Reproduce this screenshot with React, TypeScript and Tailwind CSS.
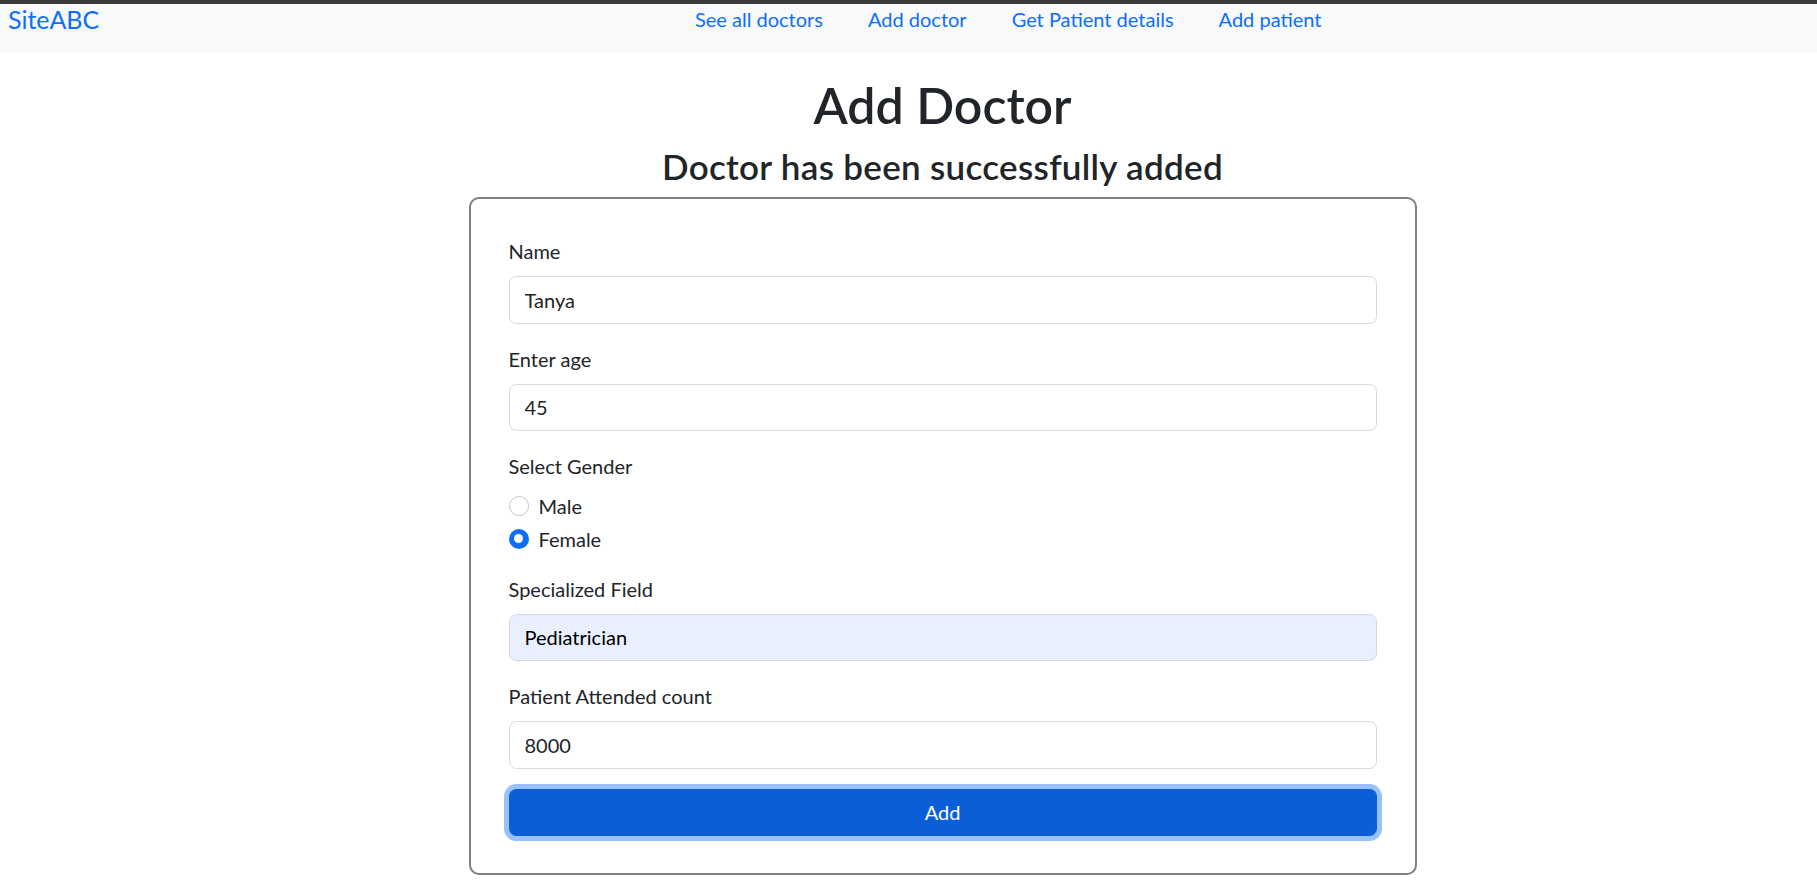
import React from "react";

function Field({ label, value, autofill }: { label: string; value: string; autofill?: boolean }) {
  return (
    <div className="mb-[20px]">
      <label className="mb-[10px] block text-[20px] leading-[30px]">{label}</label>
      <input
        readOnly
        value={value}
        className={
          autofill
            ? "block h-[47.5px] w-full rounded-[7.5px] border border-[#d6dadf] bg-[#e8f0fe] px-[15px] text-[20px] leading-[30px] text-black outline-none"
            : "block h-[47.5px] w-full rounded-[7.5px] border border-[#d6dadf] bg-white px-[15px] text-[20px] leading-[30px] text-[#212529] outline-none"
        }
      />
    </div>
  );
}

function Radio({ label, checked }: { label: string; checked?: boolean }) {
  return (
    <div className="mb-[2.5px] flex h-[30px] items-start">
      {checked ? (
        <span className="mt-[5px] flex h-[20px] w-[20px] items-center justify-center rounded-full bg-[#0d6efd]">
          <span className="h-[9px] w-[9px] rounded-full bg-white" />
        </span>
      ) : (
        <span className="mt-[5px] h-[20px] w-[20px] rounded-full border border-[#c4c4c4] bg-white" />
      )}
      <span className="ml-[10px] text-[20px] leading-[30px]">{label}</span>
    </div>
  );
}

export default function App() {
  return (
    <div className="min-h-screen bg-white font-['Lato','Open_Sans',sans-serif] text-[#212529]">
      <div className="h-[4px] bg-[#3a3a3a]" />
      <nav className="flex h-[49px] items-start bg-[#f8f9fa]">
        <div className="w-[695px] shrink-0 pl-[8px]">
          <a className="text-[25px] leading-[30px] text-[#0d6efd]">SiteABC</a>
        </div>
        <ul className="flex gap-[45px] text-[20px] leading-[30px] text-[#0d6efd]">
          <li>See all doctors</li>
          <li>Add doctor</li>
          <li>Get Patient details</li>
          <li>Add patient</li>
        </ul>
      </nav>
      <main className="flex flex-col items-center pl-[68px]">
        <h1 className="mt-[22px] mb-[10px] text-[50px] font-semibold leading-[60px]">Add Doctor</h1>
        <h3 className="mb-[10px] text-[35px] font-semibold leading-[42px] tracking-[0.3px]">Doctor has been successfully added</h3>
        <div className="w-[948px] rounded-[10px] border-2 border-[#7f7f7f] px-[38px] pt-[37px] pb-[37px]">
          <Field label="Name" value="Tanya" />
          <Field label="Enter age" value="45" />
          <div className="mb-[20px]">
            <label className="mb-[10px] block text-[20px] leading-[30px]">Select Gender</label>
            <Radio label="Male" />
            <Radio label="Female" checked />
          </div>
          <Field label="Specialized Field" value="Pediatrician" autofill />
          <Field label="Patient Attended count" value="8000" />
          <button className="block h-[47.5px] w-full rounded-[7.5px] bg-[#0b5ed7] text-[20px] leading-[30px] text-white shadow-[0_0_0_5px_#98c1fd]">
            Add
          </button>
        </div>
      </main>
    </div>
  );
}
